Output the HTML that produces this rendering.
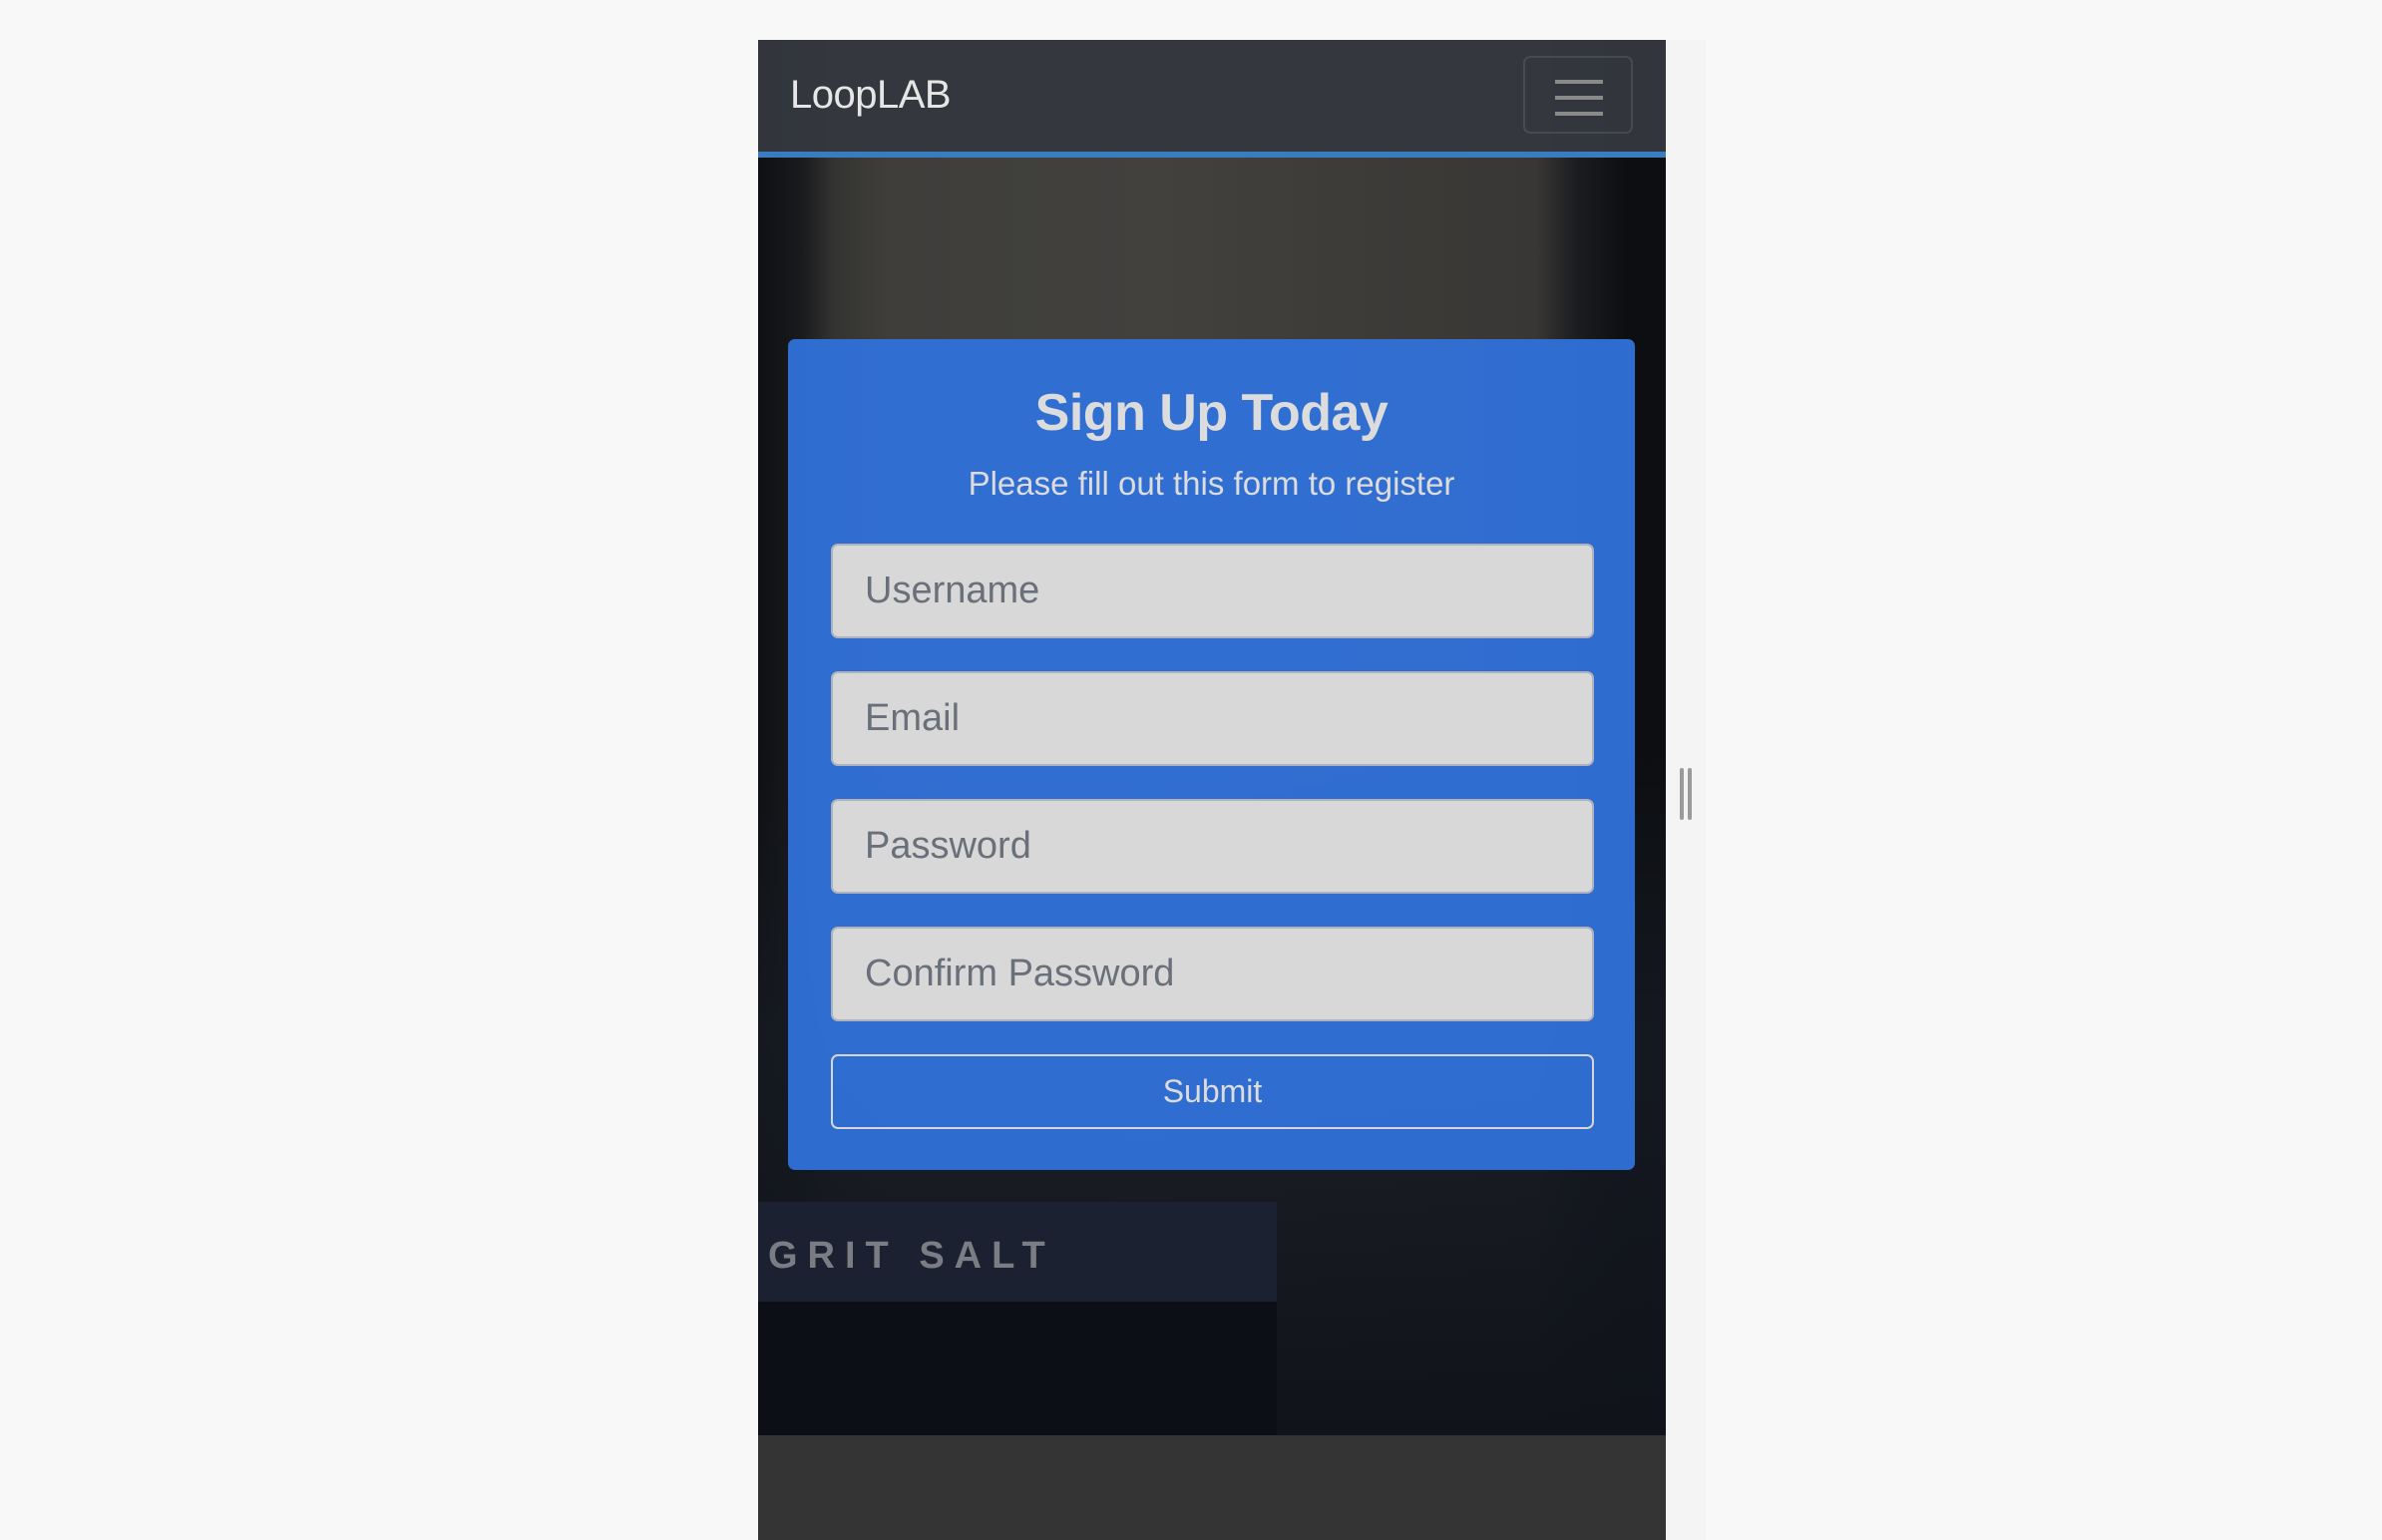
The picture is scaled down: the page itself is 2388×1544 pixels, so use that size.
<!DOCTYPE html>
<html><head><meta charset="utf-8"><style>
*{margin:0;padding:0;box-sizing:border-box}
html,body{width:2388px;height:1544px;overflow:hidden;background:#f8f8f8;font-family:"Liberation Sans",Arial,sans-serif}
.strip{position:absolute;left:1670px;top:40px;width:40px;height:1504px;background:#f4f4f4}
.bars{position:absolute;top:770px;width:4px;height:52px;background:#9a9a9a;border-radius:2px}
.frame{position:absolute;left:760px;top:40px;width:910px;height:1504px;overflow:hidden;background:#333}
.bg{position:absolute;left:0;top:0;width:910px;height:1399px;
background:
linear-gradient(90deg,#0d0f12 0px,#1a1b1d 45px,#333331 75px,#3f3e3b 130px,#42413e 400px,#3c3b38 620px,#383735 780px,#1c1d20 820px,#0c0e11 870px,#0c0e11 910px);}
.bg2{position:absolute;left:0;top:700px;width:910px;height:699px;
background:linear-gradient(180deg,rgba(22,26,34,0) 0,rgba(22,26,34,.85) 300px,#10131a 699px)}
.box{position:absolute;left:0;top:1165px;width:520px;height:240px;background:#1b2130}
.box2{position:absolute;left:0;top:1265px;width:520px;height:134px;background:#0c0f15}
.grit{position:absolute;left:10px;top:1198px;color:#7a7d83;font-size:38px;font-weight:bold;letter-spacing:10px}
.nav{position:absolute;left:0;top:0;width:910px;height:118px;background:rgba(52,56,62,.96);border-bottom:6px solid #3a7cc0}
.brand{position:absolute;left:32px;top:33px;font-size:40px;color:#e6e6e6;letter-spacing:-0.5px}
.tog{position:absolute;left:767px;top:16px;width:110px;height:78px;border:2px solid rgba(255,255,255,.1);border-radius:7px}
.tog i{position:absolute;left:30px;width:48px;height:4px;background:#8a8a8a}
.footer{position:absolute;left:0;top:1399px;width:910px;height:105px;background:#343434}
.card{position:absolute;left:30px;top:300px;width:849px;height:833px;background:rgba(49,112,214,.97);border-radius:7px}
h1{position:absolute;left:0;width:849px;top:44px;text-align:center;font-size:52px;font-weight:bold;color:#dcdcdc;letter-spacing:-0.5px}
.sub{position:absolute;left:0;width:849px;top:126px;text-align:center;font-size:33px;color:#dcdcdc}
.in{position:absolute;left:43px;width:765px;height:95px;background:#d8d8d8;border:2px solid #aeb3bb;border-radius:7px;font-size:38px;color:#6a7079;padding-left:32px;line-height:91px}
.btn{position:absolute;left:43px;top:717px;width:765px;height:75px;border:2px solid #d6d6d6;border-radius:7px;text-align:center;line-height:71px;font-size:32px;color:#dcdcdc}
</style></head><body>
<div class="strip"></div>
<div class="bars" style="left:1684px"></div><div class="bars" style="left:1692px"></div>
<div class="frame">
 <div class="bg"></div>
 <div class="bg2"></div>
 <div class="box"></div><div class="box2"></div>
 <div class="grit">GRIT SALT</div>
 <div class="footer"></div>
 <div class="nav"><div class="brand">LoopLAB</div>
  <div class="tog"><i style="top:22px"></i><i style="top:38px"></i><i style="top:54px"></i></div></div>
 <div class="card">
  <h1>Sign Up Today</h1>
  <div class="sub">Please fill out this form to register</div>
  <div class="in" style="top:205px">Username</div>
  <div class="in" style="top:333px">Email</div>
  <div class="in" style="top:461px">Password</div>
  <div class="in" style="top:589px">Confirm Password</div>
  <div class="btn">Submit</div>
 </div>
</div>
</body></html>
